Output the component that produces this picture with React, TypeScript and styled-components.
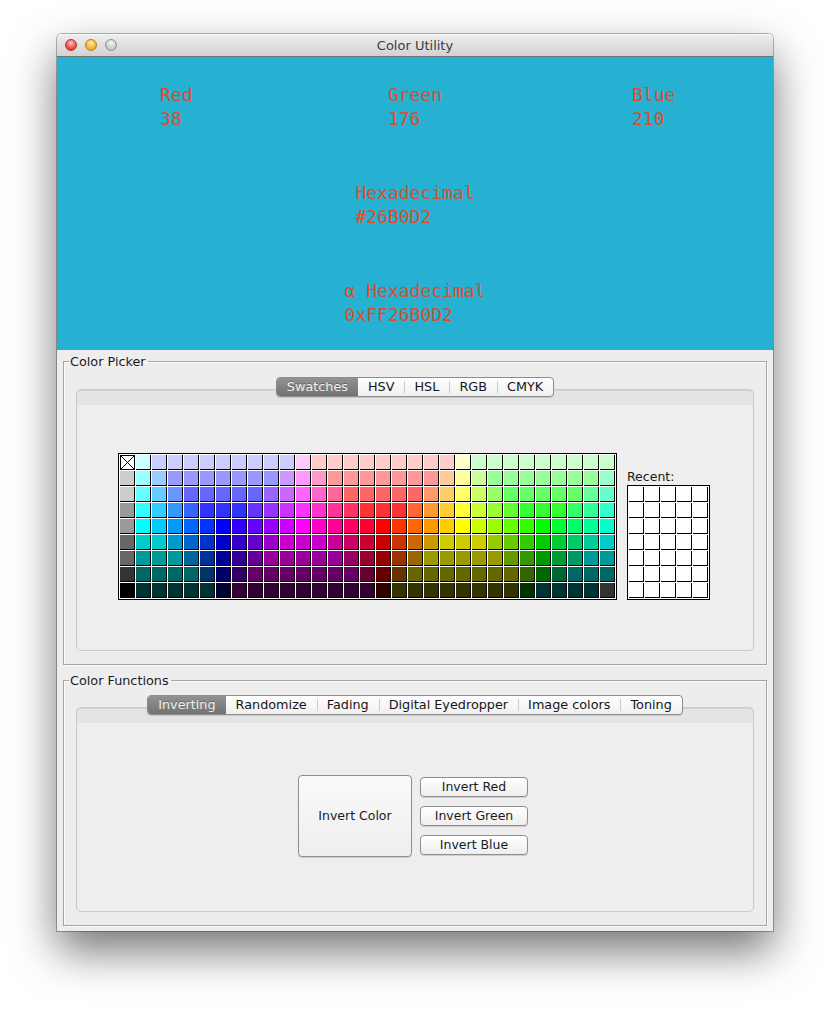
import React from 'react';
import styled, { createGlobalStyle } from 'styled-components';

const UI_FONT = `'DejaVu Sans', 'Liberation Sans', sans-serif`;
const MONO_FONT = `'DejaVu Sans Mono', 'Liberation Mono', monospace`;

const GlobalStyle = createGlobalStyle`
  html, body {
    margin: 0;
    padding: 0;
    background: #ffffff;
  }
  body {
    font-family: ${UI_FONT};
  }
`;

// java swatch palette, web-safe shorthand, "x*n" repeats a colour n times
const SWATCH_ROWS = [
  'fff cff ccf*9 fcf fcc*9 ffc cfc*9',
  'ccc 9ff 9cf 99f*7 c9f f9f f9c f99*7 fc9 ff9 cf9 9f9*7 9fc',
  'ccc 6ff 6cf 69f 66f*5 96f c6f f6f f6c f69 f66*5 f96 fc6 ff6 cf6 9f6 6f6*5 6f9 6fc',
  '999 3ff 3cf 39f 36f 33f*3 63f 93f c3f f3f f3c f39 f36 f33*3 f63 f93 fc3 ff3 cf3 9f3 6f3 3f3*3 3f6 3f9 3fc',
  '999 0ff 0cf 09f 06f 03f 00f 30f 60f 90f c0f f0f f0c f09 f06 f03 f00 f30 f60 f90 fc0 ff0 cf0 9f0 6f0 3f0 0f0 0f3 0f6 0f9 0fc',
  '666 0cc*2 09c 06c 03c 00c 30c 60c 90c c0c*3 c09 c06 c03 c00 c30 c60 c90 cc0*3 9c0 6c0 3c0 0c0 0c3 0c6 0c9 0cc',
  '666 099*3 069 039 009 309 609 909*5 906 903 900 930 960 990*5 690 390 090 093 096 099*2',
  '333 066*4 036 006 306 606*7 603 600 630 660*7 360 060 063 066*3',
  '000 033*5 003 303*9 300 330*8 030 033*4 333',
];

const swatches = SWATCH_ROWS.flatMap((row) =>
  row.split(' ').flatMap((token) => {
    const [hex, count] = token.split('*');
    return Array.from({ length: count ? Number(count) : 1 }, () => `#${hex}`);
  }),
);

const pickerTabs = ['Swatches', 'HSV', 'HSL', 'RGB', 'CMYK'];
const functionTabs = [
  'Inverting',
  'Randomize',
  'Fading',
  'Digital Eyedropper',
  'Image colors',
  'Toning',
];

const TabBar = ({ tabs, active }: { tabs: string[]; active: number }) => (
  <TabStrip>
    {tabs.map((label, index) => (
      <Tab
        key={label}
        $active={index === active}
        $afterActive={index === active + 1}
      >
        {label}
      </Tab>
    ))}
  </TabStrip>
);

const App = () => {
  return (
    <>
      <GlobalStyle />
      <Page>
        <Window>
          <TitleBar>
            <Lights>
              <Light $tone="red" />
              <Light $tone="yellow" />
              <Light $tone="gray" />
            </Lights>
            <Title>Color Utility</Title>
          </TitleBar>

          <ColorDisplay>
            <ValueLabel>
              Red
              <br />
              38
            </ValueLabel>
            <ValueLabel>
              Green
              <br />
              176
            </ValueLabel>
            <ValueLabel>
              Blue
              <br />
              210
            </ValueLabel>
            <ValueLabel $column={2}>
              Hexadecimal
              <br />
              #26B0D2
            </ValueLabel>
            <ValueLabel $column={2}>
              α Hexadecimal
              <br />
              0xFF26B0D2
            </ValueLabel>
          </ColorDisplay>

          <Body>
            <Group $gap={4}>
              <GroupTitle>Color Picker</GroupTitle>
              <TabPane $gap={8}>
                <TabBar tabs={pickerTabs} active={0} />
                <Panel $height={262} $shift={-1}>
                  <SwatchArea>
                    <SwatchGrid $columns={31}>
                      {swatches.map((color, index) =>
                        index === 0 ? (
                          <NoneCell key={index}>
                            <svg width="15" height="15" viewBox="0 0 15 15">
                              <rect x="0.5" y="0.5" width="14" height="14" fill="#fff" stroke="#000" />
                              <path d="M1 1L14 14M14 1L1 14" stroke="#000" strokeWidth="1" />
                            </svg>
                          </NoneCell>
                        ) : (
                          <Swatch key={index} style={{ background: color }} />
                        ),
                      )}
                    </SwatchGrid>
                    <RecentColumn>
                      <RecentLabel>Recent:</RecentLabel>
                      <SwatchGrid $columns={5}>
                        {Array.from({ length: 35 }, (_, index) => (
                          <Swatch key={index} />
                        ))}
                      </SwatchGrid>
                    </RecentColumn>
                  </SwatchArea>
                </Panel>
              </TabPane>
            </Group>

            <Group $gap={8}>
              <GroupTitle>Color Functions</GroupTitle>
              <TabPane $gap={7}>
                <TabBar tabs={functionTabs} active={0} />
                <Panel $height={205} $shift={-2}>
                  <InvertRow>
                    <BigButton>Invert Color</BigButton>
                    <ButtonStack>
                      <SmallButton>Invert Red</SmallButton>
                      <SmallButton>Invert Green</SmallButton>
                      <SmallButton>Invert Blue</SmallButton>
                    </ButtonStack>
                  </InvertRow>
                </Panel>
              </TabPane>
            </Group>
          </Body>
        </Window>
      </Page>
    </>
  );
};

export default App;

const Page = styled.div`
  height: 1010px;
  box-sizing: border-box;
  padding: 34px 0 0 57px;
  overflow: hidden;
  background: #ffffff;
`;

const Window = styled.div`
  width: 716px;
  border-radius: 5px 5px 0 0;
  background: #ededed;
  box-shadow: 0 0 0 1px rgba(0, 0, 0, 0.28), 0 20px 45px rgba(0, 0, 0, 0.55);
`;

const TitleBar = styled.div`
  position: relative;
  height: 22px;
  display: flex;
  align-items: center;
  justify-content: center;
  border-radius: 5px 5px 0 0;
  border-bottom: 1px solid #707070;
  background: linear-gradient(#eeeeee, #d2d2d2);
  box-shadow: inset 0 1px 0 #f8f8f8;
`;

const Lights = styled.div`
  position: absolute;
  left: 8px;
  top: 5px;
  display: flex;
  gap: 8px;
`;

const lightColors = {
  red: ['#ffc2bd', '#e8453e', '#a8302b'],
  yellow: ['#ffe9a6', '#eeb02f', '#b47d1c'],
  gray: ['#f6f6f6', '#c9c9c9', '#8e8e8e'],
};

const Light = styled.span<{ $tone: keyof typeof lightColors }>`
  width: 12px;
  height: 12px;
  border-radius: 50%;
  box-sizing: border-box;
  border: 1px solid ${(p) => lightColors[p.$tone][2]};
  background: radial-gradient(
    circle at 50% 30%,
    ${(p) => lightColors[p.$tone][0]} 0,
    ${(p) => lightColors[p.$tone][1]} 65%
  );
`;

const Title = styled.span`
  font-size: 13px;
  color: #3c3c3c;
`;

const ColorDisplay = styled.div`
  height: 293px;
  background: #26b0d2;
  display: grid;
  grid-template-columns: repeat(3, 1fr);
  grid-template-rows: repeat(3, 1fr);
`;

const ValueLabel = styled.div<{ $column?: number }>`
  grid-column: ${(p) => p.$column ?? 'auto'};
  justify-self: center;
  align-self: center;
  padding-top: 3px;
  text-align: left;
  white-space: nowrap;
  font-family: ${MONO_FONT};
  font-size: 18px;
  line-height: 24px;
  color: #d94f2d;
`;

const Body = styled.div`
  padding: 0 6px 5px;
  font-size: 12.5px;
  color: #1a1a1a;
`;

const Group = styled.fieldset<{ $gap: number }>`
  margin: ${(p) => p.$gap}px 0 0;
  padding: 0 12px 13px 12px;
  min-width: 0;
  border: 1px solid #a4a4a4;
  box-shadow: 1px 1px 0 #fbfbfb, inset 1px 1px 0 #fbfbfb;
`;

const GroupTitle = styled.legend`
  margin-left: -7px;
  padding: 0 2px 0 1px;
  font-size: 12.8px;
  line-height: 15px;
  color: #1a1a1a;
`;

const TabPane = styled.div<{ $gap: number }>`
  margin-top: ${(p) => p.$gap}px;
  display: flex;
  flex-direction: column;
`;

const TabStrip = styled.div`
  align-self: center;
  position: relative;
  z-index: 1;
  margin-bottom: -8px;
  display: flex;
  border: 1px solid #8c8c8c;
  border-radius: 4px;
  overflow: hidden;
  background: linear-gradient(#ffffff, #f0f0f0);
  box-shadow: 0 1px 1px rgba(0, 0, 0, 0.12);
`;

const Tab = styled.div<{ $active: boolean; $afterActive: boolean }>`
  position: relative;
  height: 18px;
  line-height: 18px;
  padding: 0 10px;
  font-size: 12.8px;
  white-space: nowrap;
  color: ${(p) => (p.$active ? '#f0f0f0' : '#161616')};
  background: ${(p) =>
    p.$active ? 'linear-gradient(#929292, #727272)' : 'transparent'};
  text-shadow: ${(p) => (p.$active ? '0 -1px 0 rgba(0,0,0,0.25)' : 'none')};

  &:not(:first-child)::before {
    content: '';
    display: ${(p) => (p.$active || p.$afterActive ? 'none' : 'block')};
    position: absolute;
    left: 0;
    top: 3px;
    bottom: 3px;
    width: 1px;
    background: #cbcbcb;
  }
`;

const Panel = styled.div<{ $height: number; $shift: number }>`
  height: ${(p) => p.$height}px;
  box-sizing: border-box;
  padding: 12px 0 0;
  padding-left: ${(p) => Math.max(0, p.$shift) * 2}px;
  padding-right: ${(p) => Math.max(0, -p.$shift) * 2}px;
  display: flex;
  align-items: center;
  justify-content: center;
  border: 1px solid #c8c8c8;
  border-radius: 5px;
  background: linear-gradient(#e4e4e4 0, #e4e4e4 15px, #eeeeee 15px);
  box-shadow: inset 0 1px 0 #d6d6d6;
`;

const SwatchArea = styled.div`
  display: flex;
  align-items: flex-end;
  gap: 10px;
`;

const SwatchGrid = styled.div<{ $columns: number }>`
  display: grid;
  grid-template-columns: repeat(${(p) => p.$columns}, 15px);
  grid-auto-rows: 15px;
  gap: 1px;
  padding: 1px;
  border: 1px solid #000;
  background: #ffffff;
`;

const Swatch = styled.div`
  background: #ffffff;
  box-shadow: inset -1px -1px 0 #000;
`;

const NoneCell = styled.div`
  display: flex;
  svg {
    display: block;
  }
`;

const RecentColumn = styled.div`
  display: flex;
  flex-direction: column;
  align-items: flex-start;
`;

const RecentLabel = styled.div`
  font-size: 12.5px;
  line-height: 14px;
  margin-bottom: 1px;
  color: #1a1a1a;
`;

const InvertRow = styled.div`
  display: flex;
  align-items: center;
  gap: 8px;
`;

const ButtonBase = styled.button`
  box-sizing: border-box;
  margin: 0;
  padding: 0;
  font-family: ${UI_FONT};
  font-size: 12.5px;
  color: #1a1a1a;
  border: 1px solid #8e8e8e;
  border-radius: 4px;
  background: linear-gradient(#ffffff, #eeeeee);
  box-shadow: 0 1px 1px rgba(0, 0, 0, 0.14);
`;

const BigButton = styled(ButtonBase)`
  width: 114px;
  height: 82px;
  background: linear-gradient(#fafafa, #eeeeee);
`;

const ButtonStack = styled.div`
  display: flex;
  flex-direction: column;
  gap: 9px;
`;

const SmallButton = styled(ButtonBase)`
  width: 108px;
  height: 20px;
  line-height: 18px;
`;
